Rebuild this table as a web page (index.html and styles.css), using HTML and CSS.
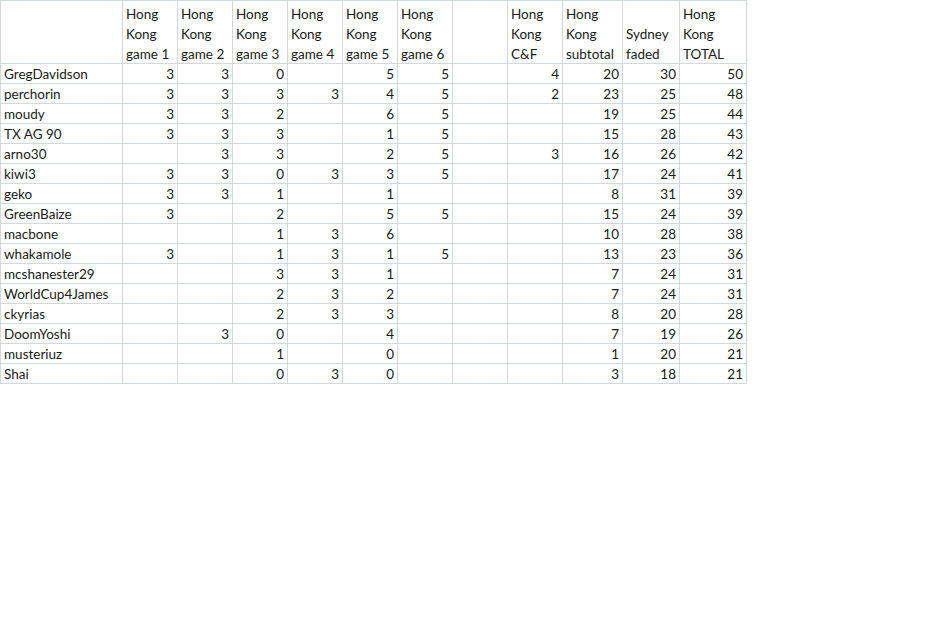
FILE: index.html
```html
<!DOCTYPE html>
<html>
<head>
<meta charset="utf-8">
<link rel="stylesheet" href="styles.css">
</head>
<body>
<table class="sheet">
<colgroup>
<col class="c-name"><col class="c-g"><col class="c-g"><col class="c-g"><col class="c-g"><col class="c-g"><col class="c-g"><col class="c-g"><col class="c-g"><col class="c-sub"><col class="c-syd"><col class="c-tot">
</colgroup>
<thead>
<tr class="head">
<th><div class="hd"></div></th>
<th><div class="hd">Hong<br>Kong<br>game 1</div></th>
<th><div class="hd">Hong<br>Kong<br>game 2</div></th>
<th><div class="hd">Hong<br>Kong<br>game 3</div></th>
<th><div class="hd">Hong<br>Kong<br>game 4</div></th>
<th><div class="hd">Hong<br>Kong<br>game 5</div></th>
<th><div class="hd">Hong<br>Kong<br>game 6</div></th>
<th><div class="hd"></div></th>
<th><div class="hd">Hong<br>Kong<br>C&amp;F</div></th>
<th><div class="hd">Hong<br>Kong<br>subtotal</div></th>
<th><div class="hd"><br>Sydney<br>faded</div></th>
<th><div class="hd">Hong<br>Kong<br>TOTAL</div></th>
</tr>
</thead>
<tbody>
<tr><td class="n">GregDavidson</td><td>3</td><td>3</td><td>0</td><td></td><td>5</td><td>5</td><td></td><td>4</td><td>20</td><td>30</td><td>50</td></tr>
<tr><td class="n">perchorin</td><td>3</td><td>3</td><td>3</td><td>3</td><td>4</td><td>5</td><td></td><td>2</td><td>23</td><td>25</td><td>48</td></tr>
<tr><td class="n">moudy</td><td>3</td><td>3</td><td>2</td><td></td><td>6</td><td>5</td><td></td><td></td><td>19</td><td>25</td><td>44</td></tr>
<tr><td class="n">TX AG 90</td><td>3</td><td>3</td><td>3</td><td></td><td>1</td><td>5</td><td></td><td></td><td>15</td><td>28</td><td>43</td></tr>
<tr><td class="n">arno30</td><td></td><td>3</td><td>3</td><td></td><td>2</td><td>5</td><td></td><td>3</td><td>16</td><td>26</td><td>42</td></tr>
<tr><td class="n">kiwi3</td><td>3</td><td>3</td><td>0</td><td>3</td><td>3</td><td>5</td><td></td><td></td><td>17</td><td>24</td><td>41</td></tr>
<tr><td class="n">geko</td><td>3</td><td>3</td><td>1</td><td></td><td>1</td><td></td><td></td><td></td><td>8</td><td>31</td><td>39</td></tr>
<tr><td class="n">GreenBaize</td><td>3</td><td></td><td>2</td><td></td><td>5</td><td>5</td><td></td><td></td><td>15</td><td>24</td><td>39</td></tr>
<tr><td class="n">macbone</td><td></td><td></td><td>1</td><td>3</td><td>6</td><td></td><td></td><td></td><td>10</td><td>28</td><td>38</td></tr>
<tr><td class="n">whakamole</td><td>3</td><td></td><td>1</td><td>3</td><td>1</td><td>5</td><td></td><td></td><td>13</td><td>23</td><td>36</td></tr>
<tr><td class="n">mcshanester29</td><td></td><td></td><td>3</td><td>3</td><td>1</td><td></td><td></td><td></td><td>7</td><td>24</td><td>31</td></tr>
<tr><td class="n">WorldCup4James</td><td></td><td></td><td>2</td><td>3</td><td>2</td><td></td><td></td><td></td><td>7</td><td>24</td><td>31</td></tr>
<tr><td class="n">ckyrias</td><td></td><td></td><td>2</td><td>3</td><td>3</td><td></td><td></td><td></td><td>8</td><td>20</td><td>28</td></tr>
<tr><td class="n">DoomYoshi</td><td></td><td>3</td><td>0</td><td></td><td>4</td><td></td><td></td><td></td><td>7</td><td>19</td><td>26</td></tr>
<tr><td class="n">musteriuz</td><td></td><td></td><td>1</td><td></td><td>0</td><td></td><td></td><td></td><td>1</td><td>20</td><td>21</td></tr>
<tr><td class="n">Shai</td><td></td><td></td><td>0</td><td>3</td><td>0</td><td></td><td></td><td></td><td>3</td><td>18</td><td>21</td></tr>
</tbody>
</table>
</body>
</html>
```
FILE: styles.css
```css
html, body {
  margin: 0;
  padding: 0;
  background: #ffffff;
}
body {
  font-family: Lato, "Open Sans", sans-serif;
  font-size: 13.5px;
  color: #1a1a1a;
}
.sheet {
  border-collapse: collapse;
  table-layout: fixed;
  width: 746px;
}
.c-name { width: 122px; }
.c-g { width: 55px; }
.c-sub { width: 60px; }
.c-syd { width: 57px; }
.c-tot { width: 67px; }
.sheet th, .sheet td {
  border: 1px solid #d0d7e5;
  white-space: nowrap;
  overflow: hidden;
}
.sheet th {
  font-weight: normal;
  text-align: left;
  vertical-align: top;
  line-height: 20px;
  padding: 3px 3px 0;
  height: 59px;
}
.sheet th .hd {
  height: 59px;
  overflow: visible;
}
.sheet td {
  text-align: right;
  vertical-align: top;
  line-height: 17px;
  padding: 2px 3px 0;
  height: 17px;
}
.sheet td.n {
  text-align: left;
}
```
